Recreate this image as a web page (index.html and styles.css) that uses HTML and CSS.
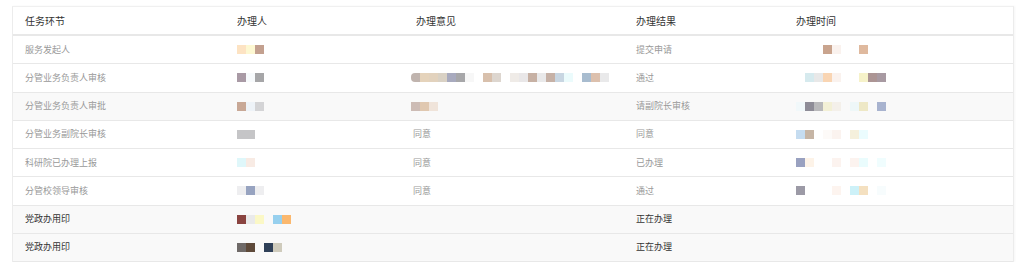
FILE: index.html
```html
<!DOCTYPE html>
<html lang="zh-CN">
<head>
<meta charset="utf-8">
<title>办理记录</title>
<link rel="stylesheet" href="styles.css">
</head>
<body>
<div class="page">
  <table class="flow">
    <colgroup>
      <col class="c1"><col class="c2"><col class="c3"><col class="c4"><col class="c5">
    </colgroup>
    <thead>
      <tr><th>任务环节</th><th>办理人</th><th class="op">办理意见</th><th>办理结果</th><th>办理时间</th></tr>
    </thead>
    <tbody>
      <tr>
        <td>服务发起人</td>
        <td><span class="mz"><i style="background:#fde3c3"></i><i style="background:#fdf8d2"></i><i style="background:#c3a08f"></i></span></td>
        <td></td>
        <td>提交申请</td>
        <td><span class="mz"><i></i><i></i><i></i><i style="background:#c9a48e"></i><i style="background:#faf2ee"></i><i></i><i></i><i style="background:#dfb99e"></i></span></td>
      </tr>
      <tr>
        <td>分管业务负责人审核</td>
        <td><span class="mz"><i style="background:#a99aa5"></i><i style="background:#f7fafc"></i><i style="background:#a6a6a8"></i></span></td>
        <td class="op"><span class="mz nudge"><i class="rl" style="background:#c0b4ae"></i><i style="background:#e5d3bb"></i><i style="background:#e2d2bd"></i><i style="background:#d9d1c4"></i><i style="background:#a8aabe"></i><i style="background:#a7a7a9"></i><i style="background:#f7f7f7"></i><i></i><i style="background:#d8c0ac"></i><i style="background:#ddd6cf"></i><i></i><i style="background:#efebe7"></i><i style="background:#e9e7e8"></i><i style="background:#c7b1a4"></i><i style="background:#e9e9ea"></i><i style="background:#c6b1a6"></i><i style="background:#c8d6e2"></i><i style="background:#ebfbfc"></i><i></i><i style="background:#a8bccf"></i><i style="background:#dcc0ad"></i><i style="background:#e9e9ea"></i></span></td>
        <td>通过</td>
        <td><span class="mz"><i></i><i style="background:#d6eaee"></i><i style="background:#e8e8e8"></i><i style="background:#f9d5b3"></i><i style="background:#faf2ee"></i><i></i><i></i><i style="background:#f6f2c9"></i><i style="background:#ac9594"></i><i style="background:#a89aa2"></i></span></td>
      </tr>
      <tr class="alt">
        <td>分管业务负责人审批</td>
        <td><span class="mz"><i style="background:#c8a896"></i><i style="background:#eef3f8"></i><i style="background:#d4d4d6"></i></span></td>
        <td class="op"><span class="mz nudge"><i style="background:#cdbcb5"></i><i style="background:#e0c8b0"></i><i style="background:#f0e4da"></i></span></td>
        <td>请副院长审核</td>
        <td><span class="mz"><i style="background:#f1f8fa"></i><i style="background:#8e8c97"></i><i style="background:#b9b9bb"></i><i style="background:#f3f0d6"></i><i style="background:#f4f0ea"></i><i></i><i style="background:#eef7f8"></i><i style="background:#eee8c6"></i><i></i><i style="background:#a8b3cf"></i></span></td>
      </tr>
      <tr>
        <td>分管业务副院长审核</td>
        <td><span class="mz"><i style="background:#c5c5c7"></i><i style="background:#c5c5c7"></i></span></td>
        <td class="op">同意</td>
        <td>同意</td>
        <td><span class="mz"><i style="background:#c5dcf0"></i><i style="background:#c6b5a5"></i><i></i><i style="background:#fdfaf8"></i><i style="background:#fbf3ef"></i><i></i><i style="background:#f5f0dc"></i><i style="background:#ebfcfe"></i></span></td>
      </tr>
      <tr>
        <td>科研院已办理上报</td>
        <td><span class="mz"><i style="background:#dff7fa"></i><i style="background:#f8ebe4"></i></span></td>
        <td class="op">同意</td>
        <td>已办理</td>
        <td><span class="mz"><i style="background:#99a1c0"></i><i style="background:#fdf3e8"></i><i></i><i></i><i style="background:#fcf3ef"></i><i></i><i style="background:#fcf3ef"></i><i style="background:#eafcfd"></i><i></i><i style="background:#f0fdfe"></i></span></td>
      </tr>
      <tr>
        <td>分管校领导审核</td>
        <td><span class="mz"><i style="background:#eeeef0"></i><i style="background:#97a3c0"></i><i style="background:#eeeef0"></i></span></td>
        <td class="op">同意</td>
        <td>通过</td>
        <td><span class="mz"><i style="background:#9c9aa6"></i><i></i><i></i><i></i><i style="background:#fdf4ef"></i><i></i><i style="background:#cdf1f8"></i><i style="background:#f4e0c0"></i><i></i><i style="background:#f7fcfd"></i></span></td>
      </tr>
      <tr class="alt now">
        <td>党政办用印</td>
        <td><span class="mz"><i style="background:#8a4440"></i><i style="background:#eaeaea"></i><i style="background:#fbf8c6"></i><i></i><i style="background:#97d0ee"></i><i style="background:#fbb86e"></i></span></td>
        <td></td>
        <td>正在办理</td>
        <td></td>
      </tr>
      <tr class="alt now">
        <td>党政办用印</td>
        <td><span class="mz"><i style="background:#6f6a68"></i><i style="background:#5e4a3a"></i><i></i><i style="background:#2f4058"></i><i style="background:#cfcbbc"></i></span></td>
        <td></td>
        <td>正在办理</td>
        <td></td>
      </tr>
    </tbody>
  </table>
</div>
</body>
</html>
```

FILE: styles.css
```css
* { box-sizing: border-box; }
html, body { margin: 0; background: #ffffff; }
body {
  font-family: "Noto Sans CJK SC", "Noto Sans", sans-serif;
  font-size: 9px;
}
.page { padding: 6px 12px 0 12px; }

.flow {
  width: 1000px;
  border-collapse: separate;
  border-spacing: 0;
  table-layout: fixed;
  border-top: 1px solid #f0f0f0;
  border-left: 1px solid #ececec;
  border-right: 1px solid #ececec;
  box-shadow: 1px 0 2px rgba(0, 0, 0, 0.04);
}
.c1 { width: 212px; }
.c2 { width: 179px; }
.c3 { width: 220px; }
.c4 { width: 160px; }
.c5 { width: 229px; }

.flow th {
  height: 29px;
  padding: 0 12px;
  text-align: left;
  font-weight: normal;
  font-size: 10px;
  color: #333333;
  border-bottom: 2px solid #e8e8e8;
  vertical-align: middle;
}
.flow th.op { padding-left: 12px; }

.flow td {
  height: 28.25px;
  padding: 0 12px;
  color: #999999;
  border-bottom: 1px solid #e8e8e8;
  vertical-align: middle;
  white-space: nowrap;
  overflow: hidden;
  line-height: 12px;
}
.flow td.op { padding-left: 9px; }
.flow tr.alt td { background: #f9f9f9; }
.flow tr.now td { color: #333333; }

.mz {
  display: flex;
  height: 9px;
}
.mz.nudge { margin-left: -2px; }
.mz i {
  display: block;
  width: 9px;
  height: 9px;
  flex: none;
}
.mz i.rl { border-radius: 4px 0 0 4px; }
```
